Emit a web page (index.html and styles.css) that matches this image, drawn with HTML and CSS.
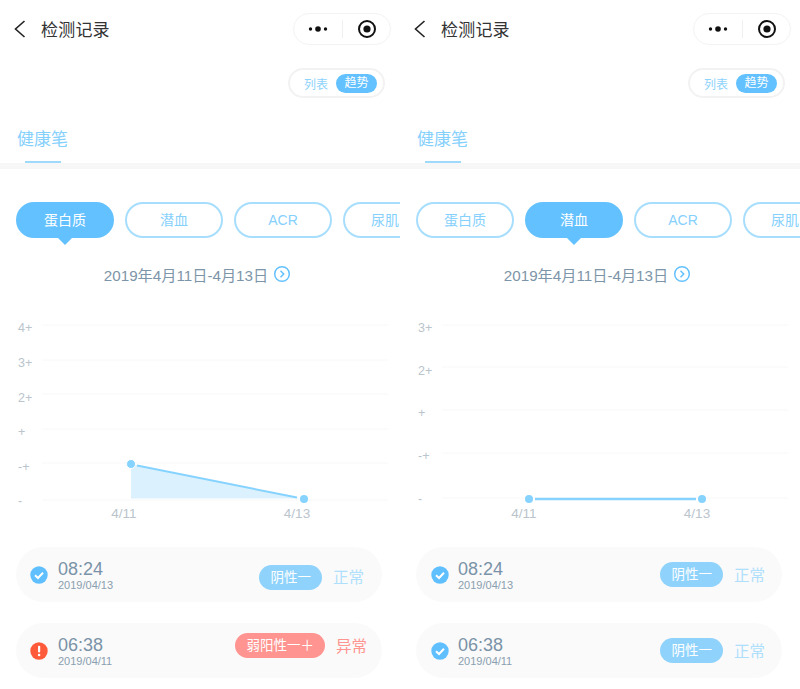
FILE: index.html
```html
<!DOCTYPE html>
<html lang="zh-CN">
<head>
  <meta charset="UTF-8">
  <title>检测记录</title>
  <link rel="stylesheet" href="styles.css">
</head>
<body>

<div class="screens">

  <!-- 蛋白质 -->
  <div class="phone">
    <div class="nav">
      <svg class="back" width="12" height="18" viewBox="0 0 12 18"><path d="M10.5 1 L1.5 9 L10.5 17" fill="none" stroke="#222" stroke-width="1.6"/></svg>
      <span class="nav-title">检测记录</span>
      <div class="capsule">
        <svg width="20" height="8" viewBox="0 0 20 8"><circle cx="2.5" cy="4" r="1.7" fill="#111"/><circle cx="10" cy="4" r="2.8" fill="#111"/><circle cx="17.5" cy="4" r="1.7" fill="#111"/></svg>
        <span class="capsule-line"></span>
        <svg width="20" height="20" viewBox="0 0 20 20"><circle cx="10" cy="10" r="8" fill="none" stroke="#111" stroke-width="2"/><circle cx="10" cy="10" r="3.6" fill="#111"/></svg>
      </div>
    </div>
    <div class="toggle-row">
      <div class="toggle">
        <span class="toggle-item">列表</span>
        <span class="toggle-item on">趋势</span>
      </div>
    </div>
    <div class="tabs"><span class="tab">健康笔</span></div>
    <div class="strip"></div>
    <div class="chips">
      <span class="chip active">蛋白质</span>
      <span class="chip">潜血</span>
      <span class="chip">ACR</span>
      <span class="chip cut">尿肌</span>
    </div>
    <div class="date-row">
      <span>2019年4月11日-4月13日</span>
      <svg width="18" height="18" viewBox="0 0 18 18"><circle cx="9" cy="9" r="7.3" fill="none" stroke="#63c1ff" stroke-width="1.5"/><path d="M7.5 5.8 L10.7 9 L7.5 12.2" fill="none" stroke="#63c1ff" stroke-width="1.5"/></svg>
    </div>
    <svg class="chart" width="400" height="220" viewBox="0 0 400 220">
      <g class="grid">
        <line x1="42" x2="388" y1="15" y2="15"/>
        <line x1="42" x2="388" y1="50" y2="50"/>
        <line x1="42" x2="388" y1="84" y2="84"/>
        <line x1="42" x2="388" y1="119" y2="119"/>
        <line x1="42" x2="388" y1="153" y2="153"/>
        <line x1="42" x2="388" y1="190" y2="190"/>
      </g>
      <g class="axis">
        <text x="18" y="22">4+</text>
        <text x="18" y="57">3+</text>
        <text x="18" y="92">2+</text>
        <text x="18" y="126">+</text>
        <text x="18" y="161">-+</text>
        <text x="18" y="195">-</text>
      </g>
      <g class="axis days">
        <text x="124" y="208" text-anchor="middle">4/11</text>
        <text x="297" y="208" text-anchor="middle">4/13</text>
      </g>
      <polygon points="131,154 300,188.500 131,188.500" fill="#dcf1fe"/>
      <line x1="137" y1="155.500" x2="297" y2="187.500" stroke="#86d3ff" stroke-width="2"/>
      <circle cx="131" cy="154" r="4.500" fill="#86d3ff" stroke="#fff"/>
      <circle cx="304" cy="189" r="4" fill="#86d3ff"/>
    </svg>
    <div class="rows">
      <div class="row">
        <svg class="state" width="18" height="18" viewBox="0 0 18 18"><circle cx="9" cy="9" r="8.700" fill="#5fbfff"/><path d="M5 9.300 L8 12 L13 6.800" fill="none" stroke="#fff" stroke-width="2"/></svg>
        <div class="when"><div class="time">08:24</div><div class="day">2019/04/13</div></div>
        <div class="result low">
          <span class="badge">阴性一</span>
          <span class="status">正常</span>
        </div>
      </div>
      <div class="row">
        <svg class="state" width="18" height="18" viewBox="0 0 18 18"><circle cx="9" cy="9" r="8.700" fill="#ff5b3a"/><rect x="8" y="3.800" width="2.200" height="6.800" rx="1" fill="#fff"/><circle cx="9.100" cy="13" r="1.300" fill="#fff"/></svg>
        <div class="when"><div class="time">06:38</div><div class="day">2019/04/11</div></div>
        <div class="result high">
          <span class="badge alert">弱阳性一＋</span>
          <span class="status alert">异常</span>
        </div>
      </div>
    </div>
  </div>

  <!-- 潜血 -->
  <div class="phone">
    <div class="nav">
      <svg class="back" width="12" height="18" viewBox="0 0 12 18"><path d="M10.5 1 L1.5 9 L10.5 17" fill="none" stroke="#222" stroke-width="1.6"/></svg>
      <span class="nav-title">检测记录</span>
      <div class="capsule">
        <svg width="20" height="8" viewBox="0 0 20 8"><circle cx="2.5" cy="4" r="1.7" fill="#111"/><circle cx="10" cy="4" r="2.8" fill="#111"/><circle cx="17.5" cy="4" r="1.7" fill="#111"/></svg>
        <span class="capsule-line"></span>
        <svg width="20" height="20" viewBox="0 0 20 20"><circle cx="10" cy="10" r="8" fill="none" stroke="#111" stroke-width="2"/><circle cx="10" cy="10" r="3.6" fill="#111"/></svg>
      </div>
    </div>
    <div class="toggle-row">
      <div class="toggle">
        <span class="toggle-item">列表</span>
        <span class="toggle-item on">趋势</span>
      </div>
    </div>
    <div class="tabs"><span class="tab">健康笔</span></div>
    <div class="strip"></div>
    <div class="chips">
      <span class="chip">蛋白质</span>
      <span class="chip active">潜血</span>
      <span class="chip">ACR</span>
      <span class="chip cut">尿肌</span>
    </div>
    <div class="date-row">
      <span>2019年4月11日-4月13日</span>
      <svg width="18" height="18" viewBox="0 0 18 18"><circle cx="9" cy="9" r="7.3" fill="none" stroke="#63c1ff" stroke-width="1.5"/><path d="M7.5 5.8 L10.7 9 L7.5 12.2" fill="none" stroke="#63c1ff" stroke-width="1.5"/></svg>
    </div>
    <svg class="chart" width="400" height="220" viewBox="0 0 400 220">
      <g class="grid">
        <line x1="42" x2="388" y1="15" y2="15"/>
        <line x1="42" x2="388" y1="57" y2="57"/>
        <line x1="42" x2="388" y1="100" y2="100"/>
        <line x1="42" x2="388" y1="143" y2="143"/>
        <line x1="42" x2="388" y1="188" y2="188"/>
      </g>
      <g class="axis">
        <text x="18" y="22">3+</text>
        <text x="18" y="65">2+</text>
        <text x="18" y="107">+</text>
        <text x="18" y="150">-+</text>
        <text x="18" y="193">-</text>
      </g>
      <g class="axis days">
        <text x="124" y="208" text-anchor="middle">4/11</text>
        <text x="297" y="208" text-anchor="middle">4/13</text>
      </g>
      <line x1="135" y1="189" x2="296" y2="189" stroke="#86d3ff" stroke-width="2.500"/>
      <circle cx="129" cy="189" r="4" fill="#86d3ff"/>
      <circle cx="302" cy="189" r="4" fill="#86d3ff"/>
    </svg>
    <div class="rows">
      <div class="row">
        <svg class="state shifted" width="18" height="18" viewBox="0 0 18 18"><circle cx="9" cy="9" r="8.700" fill="#5fbfff"/><path d="M5 9.300 L8 12 L13 6.800" fill="none" stroke="#fff" stroke-width="2"/></svg>
        <div class="when"><div class="time">08:24</div><div class="day">2019/04/13</div></div>
        <div class="result">
          <span class="badge">阴性一</span>
          <span class="status">正常</span>
        </div>
      </div>
      <div class="row">
        <svg class="state shifted" width="18" height="18" viewBox="0 0 18 18"><circle cx="9" cy="9" r="8.700" fill="#5fbfff"/><path d="M5 9.300 L8 12 L13 6.800" fill="none" stroke="#fff" stroke-width="2"/></svg>
        <div class="when"><div class="time">06:38</div><div class="day">2019/04/11</div></div>
        <div class="result">
          <span class="badge">阴性一</span>
          <span class="status">正常</span>
        </div>
      </div>
    </div>
  </div>

</div>

</body>
</html>
```

FILE: styles.css
```css
* { box-sizing: border-box; }
html, body { margin: 0; padding: 0; background: #fff; overflow: hidden; }
body { font-family: "Liberation Sans", "Noto Sans CJK SC", sans-serif; }

.screens { display: flex; width: 800px; height: 689px; }
.phone { width: 400px; overflow: hidden; }

.nav { display: flex; align-items: center; height: 58px; padding: 0 9px 0 14px; }
.back { margin-right: 15px; }
.nav-title { font-size: 17px; color: #333; letter-spacing: .2px; margin-bottom: 2px; }
.capsule { display: flex; align-items: center; justify-content: space-between; margin-left: auto; width: 98px; height: 32px; padding: 0 13px 0 14px; border: 1px solid #f3f3f3; border-radius: 16px; }
.capsule-line { width: 1px; height: 18px; background: #f0f0f0; }

.toggle-row { display: flex; justify-content: flex-end; padding: 10px 15px 0 0; }
.toggle { display: flex; align-items: center; justify-content: space-between; width: 97px; height: 30px; padding: 0 6px 0 14px; border: 2px solid #f2f2f2; border-radius: 15px; }
.toggle-item { font-size: 12px; color: #8fd3fd; }
.toggle-item.on { width: 41px; height: 19px; line-height: 19px; text-align: center; color: #fff; background: #63c1ff; border-radius: 10px; }

.tabs { height: 65px; padding: 30px 0 0 17px; }
.tab { display: inline-block; height: 35px; font-size: 17px; line-height: 23px; color: #86d0fd; background: linear-gradient(#9fdafd, #9fdafd) no-repeat center bottom / 36px 2px; }
.strip { height: 6px; background: #f7f7f7; }

.chips { display: flex; gap: 11px; padding: 33px 0 0 16px; height: 77px; width: 400px; overflow: hidden; }
.chip { position: relative; flex: none; width: 98px; height: 36px; line-height: 32px; text-align: center; font-size: 14px; color: #86d0fd; border: 2px solid #a8defd; border-radius: 18px; }
.chip.cut { text-align: left; padding-left: 26px; }
.chip.active { color: #fff; background: #63c1ff; border-color: #63c1ff; }
.chip.active::after { content: ""; position: absolute; left: 50%; bottom: -9px; margin-left: -7px; border: 7px solid transparent; border-bottom: 0; border-top-color: #63c1ff; }

.date-row { display: flex; align-items: center; justify-content: center; gap: 5px; height: 64px; padding: 0 5px 8px 0; font-size: 15.2px; color: #7d95a8; }

.chart { display: block; }
.grid line { stroke: #f8f8f8; stroke-width: 1; }
.axis text { font-size: 12.5px; fill: #b9c4cc; font-family: "Liberation Sans", sans-serif; }
.days text { font-size: 13.5px; }

.rows { display: flex; flex-direction: column; gap: 21px; padding: 17px 18px 0 16px; }
.row { display: flex; align-items: center; height: 55px; padding: 0 17px 0 14px; background: #fafafa; border-radius: 28px; }
.state { flex: none; margin-right: 10px; }
.state.shifted { margin-left: 1px; margin-right: 9px; }
.time { font-size: 18px; line-height: 19px; color: #7a93a8; margin-top: 1px; }
.day { font-size: 11px; line-height: 12px; color: #8a9fb0; }
.result { display: flex; align-items: center; gap: 11px; margin-left: auto; }
.result.low { margin-top: 5px; margin-right: 1px; }
.result.high { margin-bottom: 10px; margin-right: -2px; }
.badge { height: 25px; line-height: 25px; padding: 0 11px; font-size: 13.5px; color: #fff; background: #8fd3fd; border-radius: 13px; }
.badge.alert { background: #ff9490; }
.status { font-size: 15.5px; color: #aee0fd; margin-bottom: 2px; }
.status.alert { color: #ff9490; }
```
